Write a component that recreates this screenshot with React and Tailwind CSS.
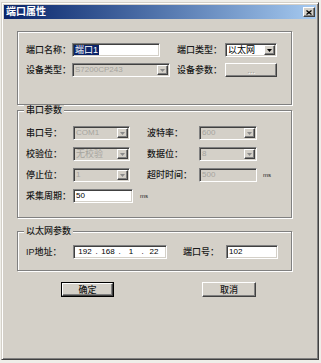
import React from "react";

// classic Win2000 dialog bits
const raised =
  "border border-t-white border-l-white border-r-[#404040] border-b-[#404040] shadow-[inset_-1px_-1px_0_#808080]";
const sunken =
  "border border-t-[#808080] border-l-[#808080] border-r-white border-b-white shadow-[inset_1px_1px_0_#404040,inset_-1px_-1px_0_#d4d0c8]";
const etched = "border border-[#808080] shadow-[1px_1px_0_#fff,inset_1px_1px_0_#fff]";

function Field({ className = "", disabled, children }) {
  return (
    <div
      className={`flex h-[14px] items-center overflow-hidden font-normal ${sunken} ${
        disabled ? "bg-[#d4d0c8] text-[#a6a49e]" : "bg-white text-black"
      } ${className}`}
    >
      {children}
    </div>
  );
}

function DropArrow({ disabled }) {
  return (
    <div className={`ml-auto mr-[1px] flex h-[10px] w-[11px] shrink-0 items-center justify-center bg-[#d4d0c8] ${raised}`}>
      <svg width="5" height="3" viewBox="0 0 5 3">
        <path d="M0 0h5L2.5 3z" fill={disabled ? "#8a8a8a" : "#000"} />
      </svg>
    </div>
  );
}

function Select({ className, disabled, value, mono }) {
  return (
    <Field className={className} disabled={disabled}>
      <span className={`pl-[2px] ${mono ? "text-[8px]" : ""}`}>{value}</span>
      <DropArrow disabled={disabled} />
    </Field>
  );
}

function Group({ title, className, children }) {
  return (
    <div className={`relative w-[275px] pl-[8px] ${etched} ${className}`}>
      {title && (
        <span className="absolute left-[6px] top-[-6px] bg-[#d4d0c8] px-[2px] leading-[10px]">{title}</span>
      )}
      {children}
    </div>
  );
}

export default function App() {
  return (
    <div className="h-[363px] w-[321px] bg-[#efeee9] pl-[1px] pt-[2px] font-['Liberation_Sans','Noto_Sans_CJK_SC',sans-serif] text-[9px] font-medium leading-[10px] text-[#1a1a1a]">
      <div className="flex h-[358px] w-[318px] flex-col border border-t-[#d4d0c8] border-l-[#d4d0c8] border-r-[#404040] border-b-[#404040] bg-[#d4d0c8] p-[2px] shadow-[inset_1px_1px_0_#fff,inset_-1px_-1px_0_#808080]">
        {/* title bar */}
        <div className="flex h-[14px] items-center bg-linear-to-r from-[#0a246a] to-[#a6caf0] pl-[2px]">
          <span className="text-[10px] font-bold text-white">端口属性</span>
          <div className={`ml-auto mr-[1px] flex h-[10px] w-[12px] items-center justify-center bg-[#d4d0c8] ${raised}`}>
            <svg width="6" height="5" viewBox="0 0 6 5">
              <path d="M0.5 0.5l5 4M5.5 0.5l-5 4" stroke="#000" strokeWidth="1.3" />
            </svg>
          </div>
        </div>

        <div className="pl-[13px] pt-[12px]">
          {/* port */}
          <Group className="flex h-[74px] flex-col gap-[6px] pt-[11px]">
            <div className="flex h-[14px] items-center">
              <span className="w-[46px]">端口名称：</span>
              <div className="w-[105px]">
                <Field className="w-[88px]">
                  <span className="ml-[1px] bg-[#0a246a] px-[1px] text-white">端口1</span>
                </Field>
              </div>
              <span className="w-[48px]">端口类型：</span>
              <Select className="w-[52px]" value="以太网" />
            </div>
            <div className="flex h-[14px] items-center">
              <span className="w-[46px]">设备类型：</span>
              <div className="w-[105px]">
                <Select className="w-[98px]" disabled mono value="S7200CP243" />
              </div>
              <span className="w-[48px]">设备参数：</span>
              <div className={`flex h-[14px] w-[52px] items-center justify-center bg-[#d4d0c8] text-[#a6a49e] [text-shadow:1px_1px_0_#fff] ${raised}`}>
                ...
              </div>
            </div>
          </Group>

          {/* serial */}
          <Group title="串口参数" className="mt-[5px] flex h-[108px] flex-col gap-[7px] pt-[15px]">
            <div className="flex h-[14px] items-center">
              <span className="w-[47px]">串口号：</span>
              <div className="w-[74px]">
                <Select className="w-[57px]" disabled mono value="COM1" />
              </div>
              <span className="w-[52px]">波特率：</span>
              <Select className="w-[58px]" disabled mono value="600" />
            </div>
            <div className="flex h-[14px] items-center">
              <span className="w-[47px]">校验位：</span>
              <div className="w-[74px]">
                <Select className="w-[57px]" disabled value="无校验" />
              </div>
              <span className="w-[52px]">数据位：</span>
              <Select className="w-[58px]" disabled mono value="8" />
            </div>
            <div className="flex h-[14px] items-center">
              <span className="w-[47px]">停止位：</span>
              <div className="w-[74px]">
                <Select className="w-[57px]" disabled mono value="1" />
              </div>
              <span className="w-[52px]">超时时间：</span>
              <Field className="w-[58px]" disabled>
                <span className="pl-[2px] text-[8px]">500</span>
              </Field>
              <span className="ml-[6px] text-[6px]">ms</span>
            </div>
            <div className="flex h-[14px] items-center">
              <span className="w-[47px]">采集周期：</span>
              <Field className="w-[60px]">
                <span className="pl-[2px] text-[8px]">50</span>
              </Field>
              <span className="ml-[7px] text-[6px]">ms</span>
            </div>
          </Group>

          {/* ethernet */}
          <Group title="以太网参数" className="mt-[13px] h-[40px] pt-[13px]">
            <div className="flex h-[14px] items-center">
              <span className="w-[47px]">IP地址：</span>
              <div className="w-[110px]">
                <Field className="w-[94px] pl-[2px] text-[8px]">
                  <span className="w-[18px] text-center">192</span>
                  <span className="w-[5px] text-center">.</span>
                  <span className="w-[18px] text-center">168</span>
                  <span className="w-[5px] text-center">.</span>
                  <span className="w-[18px] text-center">1</span>
                  <span className="w-[5px] text-center">.</span>
                  <span className="w-[18px] text-center">22</span>
                </Field>
              </div>
              <span className="w-[43px]">端口号：</span>
              <Field className="w-[52px]">
                <span className="pl-[2px] text-[8px]">102</span>
              </Field>
            </div>
          </Group>
        </div>

        {/* buttons */}
        <div className="mt-[11px] flex pl-[57px]">
          <div className="h-[15px] w-[53px] border border-black">
            <div className={`flex h-full w-full items-center justify-center ${raised}`}>确定</div>
          </div>
          <div className={`ml-[88px] flex h-[15px] w-[54px] items-center justify-center ${raised}`}>取消</div>
        </div>
      </div>
    </div>
  );
}
